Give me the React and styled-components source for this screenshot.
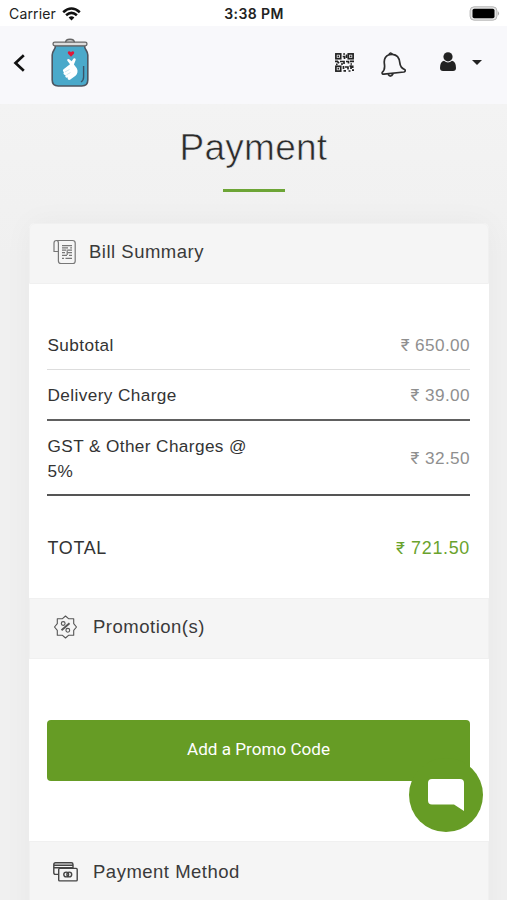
import styled, { createGlobalStyle } from 'styled-components';

const GlobalStyle = createGlobalStyle`
  * {
    box-sizing: border-box;
  }

  body {
    margin: 0;
    background: #f2f2f2;
    font-family: 'Liberation Sans', Arial, sans-serif;
    color: #3a3a3a;
  }
`;

const Screen = styled.div`
  position: relative;
  width: 507px;
  height: 900px;
  overflow: hidden;
  background: linear-gradient(#f3f3f3 104px, #f0f0f0 260px);
`;

const StatusBar = styled.div`
  display: grid;
  grid-template-columns: 1fr auto 1fr;
  align-items: center;
  height: 26px;
  padding: 1px 7px 0 9px;
  background: #fff;
  font-family: Inter, sans-serif;
  font-size: 14px;
  color: #222;
`;

const Carrier = styled.div`
  display: flex;
  align-items: center;
  gap: 6px;
  letter-spacing: 0.15px;
`;

const Clock = styled.div`
  padding-right: 1px;
  font-weight: 600;
  font-size: 14px;
  letter-spacing: 0.4px;
`;

const Battery = styled.svg`
  justify-self: end;
`;

const Header = styled.header`
  display: flex;
  align-items: center;
  height: 78px;
  padding: 0 25px 0 13px;
  background: #f8f8fb;
`;

const BackIcon = styled.svg`
  margin-bottom: 4px;
`;

const Logo = styled.svg`
  margin: 0 auto 4px 24px;
`;

const HeaderActions = styled.div`
  display: flex;
  align-items: center;
  margin-bottom: 5px;
`;

const Bell = styled.svg`
  margin: 4px 34px 0 27px;
`;

const UserIcon = styled.svg`
  margin-bottom: 2px;
`;

const Caret = styled.span`
  margin-left: 16px;
  margin-bottom: 1px;
  border: 5px solid transparent;
  border-top-color: #222;
  border-bottom: 0;
`;

const Title = styled.h1`
  margin: 0;
  padding-top: 22px;
  font-size: 37px;
  line-height: 44px;
  font-weight: 400;
  letter-spacing: 0.25px;
  text-align: center;
  color: #2b2b2b;
  -webkit-text-stroke: 0.6px #f2f2f2;
`;

const TitleRule = styled.div`
  width: 62px;
  height: 3px;
  margin: 19px auto 31px;
  background: #6da536;
`;

const Card = styled.main`
  width: 460px;
  height: 760px;
  margin-left: 29px;
  border-radius: 6px;
  background: #fff;
  box-shadow: 0 0 30px rgba(0, 0, 0, 0.04);
`;

const SectionHead = styled.div`
  display: flex;
  align-items: center;
  gap: ${({ $gap }) => $gap || 15}px;
  height: 61px;
  padding: ${({ $top }) => $top || 0}px 0 4px 23px;
  border: 1px solid #f0f0f0;
  border-radius: ${({ $first }) => ($first ? '6px 6px 0 0' : '0')};
  background: #f5f5f5;
  font-size: 18.5px;
  letter-spacing: 0.5px;
`;

const Bill = styled.div`
  height: 314px;
  padding: 36px 19px 0 18px;
`;

const Row = styled.div`
  display: flex;
  align-items: center;
  justify-content: space-between;
  height: ${({ $height }) => $height}px;
  padding-top: 2px;
  border-bottom: ${({ $border }) => $border || 'none'};
  font-size: ${({ $total }) => ($total ? 17.9 : 17.2)}px;
  line-height: 25px;
  letter-spacing: ${({ $total }) => ($total ? 0.7 : 0.4)}px;
  color: #333;
`;

const Label = styled.span`
  width: 215px;
  padding-left: 0.5px;
`;

const Amount = styled.span`
  color: ${({ $total }) => ($total ? '#6aa32d' : '#8f8f8f')};
`;

const Rupee = styled.span`
  font-family: Roboto, sans-serif;
  font-size: 17px;
`;

const PromoArea = styled.div`
  height: 182px;
  padding: 61px 19px 0 18px;
`;

const PromoButton = styled.button`
  width: 100%;
  height: 61px;
  padding: 0 0 3px;
  border: 0;
  border-radius: 4px;
  background: #669c25;
  color: #fff;
  font-family: Roboto, sans-serif;
  font-size: 17.1px;
`;

const ChatButton = styled.button`
  position: absolute;
  left: 409px;
  top: 758px;
  width: 74px;
  height: 74px;
  padding: 0;
  border: 0;
  border-radius: 50%;
  background: #669c25;
`;

const charges = [
  { label: 'Subtotal', amount: '650.00', height: 50, border: '1px solid #ddd' },
  { label: 'Delivery Charge', amount: '39.00', height: 51, border: '2px solid #606060' },
  { label: 'GST & Other Charges @ 5%', amount: '32.50', height: 75, border: '2px solid #555' },
  { label: 'TOTAL', amount: '721.50', height: 102, total: true },
];

function WifiIcon() {
  return (
    <svg width="19" height="14" viewBox="0 0 19 14" fill="none" stroke="#111" strokeWidth="2.6">
      <path d="M1.2 5.2Q9.5 -2.2 17.8 5.2" />
      <path d="M4.1 8.3Q9.5 3.6 14.9 8.3" />
      <path d="M6.6 10.4Q9.5 8 12.4 10.4L9.5 13.5Z" fill="#111" stroke="none" />
    </svg>
  );
}

function JarLogo() {
  return (
    <Logo width="40" height="50" viewBox="0 0 40 50">
      <path d="M15.5 5C15.5 0 24.5 0 24.5 5" fill="#ccc" stroke="#666" strokeWidth="1.4" />
      <path
        d="M5.5 7.5H34.5C34.5 12 37.8 12.5 37.8 17V42Q37.8 48 31.8 48H8.2Q2.2 48 2.2 42V17C2.2 12.5 5.5 12 5.5 7.5Z"
        fill="#4aa9ca"
        stroke="#4c5661"
        strokeWidth="1.6"
      />
      <rect x="3" y="4.2" width="34" height="3.6" rx="1.8" fill="#ddd" stroke="#666" strokeWidth="1.3" />
      <path d="M33.6 28V39Q33.6 42.5 31 44" fill="none" stroke="#3a5469" strokeWidth="1.4" />
      <path
        d="M21 18.8L18.3 15.9C16.7 13.8 19.3 12 21 14.2C22.7 12 25.3 13.8 23.7 15.9Z"
        fill="#df1739"
      />
      <path
        d="M17.2 22.4C17.2 20.9 18.5 20.6 19.6 21.5L21.6 23.2L23.4 20.8C24.6 19.7 26.2 20.6 25.6 22.2L23.9 26.5L26.8 30.2C28.2 33 27.6 35.6 25.5 37.8L20 41.8C18.5 42.3 17.2 41.2 17.8 39.6C15.8 40.2 14.6 38.6 15.6 37.1C13.7 37.2 12.8 35.6 14 34.1C12.4 33.5 12.6 31.7 14.2 30.8L20 26.2Z"
        fill="#fff"
      />
      <path d="M15 34L19.5 31.5M16.5 36.8L20.5 34.5" fill="none" stroke="#a9d3e2" strokeWidth="0.6" />
    </Logo>
  );
}

function QrIcon() {
  return (
    <svg width="19" height="19" viewBox="0 0 19 19" fill="none" stroke="#222" strokeWidth="1.7">
      <rect x="0.9" y="0.9" width="4.8" height="4.8" />
      <rect x="13.3" y="0.9" width="4.8" height="4.8" />
      <rect x="0.9" y="13.3" width="4.8" height="4.8" />
      <path
        d="M2.5 3.3H4M14.9 3.3H16.5M2.5 15.7H4M8.2 1H10M7.7 3.5H9.5V6M11.6 1.5V5M0 8.4H2.4L4 10.3M5 8.5H9V11M11 8.5H13.5V10.5M15 8.4H19M1 11.3H2.6M6 11H8M15.5 11H17M8.5 13V16M10 14H13V16.5M14.5 13.2H16V16M17.7 12.5V15M8.5 17.8H11M13.5 18H15.5M17 17.2H19"
      />
    </svg>
  );
}

function BellIcon() {
  return (
    <Bell width="25" height="27" viewBox="0 0 25 27" fill="none" stroke="#2c2c2c" strokeWidth="1.7" strokeLinejoin="round">
      <path d="M7.9 3.7Q9.2 0.5 11.5 3.3C16.7 3.7 18.3 6.8 18.8 11.6C19.1 15.6 21 17.5 24 18.7Q24.7 20.4 23 21L3 23.2Q0.7 23.3 1.2 21.4C3.8 19.3 4 17 3.4 13C2.7 8.2 4 5.2 7.9 3.7Z" />
      <path d="M7 23.3Q9.5 27 12.1 22.8" />
      <path d="M8 3.6L11.4 3.3" />
    </Bell>
  );
}

function BillIcon() {
  return (
    <svg width="24" height="26" viewBox="0 0 24 26" fill="none" stroke="#777" strokeWidth="1.2">
      <path d="M5.4 12.5H1V4Q1 1.5 3.4 1.5H19.5Q22.2 1.5 22.2 4V22Q22.2 24.5 20 24.5H8Q5.4 24.5 5.4 22V4Q5.4 1.5 3.4 1.5" />
      <path d="M9 6.7H19M9 8.8H15M17.2 8.8H19M9 11.2H13M15 11.2H19M9 13.7H12M14.5 13.7H19M9 16.3H14M16 16.3H19M9 19.3H11M12.5 19.3H19" />
      <path d="M14.2 10.5V16" />
    </svg>
  );
}

function PromoIcon() {
  return (
    <svg width="25" height="24" viewBox="0 0 25 24" fill="none" stroke="#555" strokeWidth="1.1" strokeLinejoin="round">
      <path d="M12.5 1L15.8 3.8H20.7V8.7L23.5 12L20.7 15.3V20.2H15.8L12.5 23L9.2 20.2H4.3V15.3L1.5 12L4.3 8.7V3.8H9.2Z" />
      <circle cx="10.2" cy="8.5" r="1.9" />
      <circle cx="14.8" cy="15.3" r="1.9" />
      <path d="M16.5 8.2L8.5 15.2" strokeWidth="1.9" />
    </svg>
  );
}

function CardsIcon() {
  return (
    <svg width="25" height="20" viewBox="0 0 25 20" fill="none" stroke="#444" strokeWidth="1.4">
      <path d="M5.5 12.4H2.5Q0.8 12.4 0.8 10.8V2.5Q0.8 0.8 2.5 0.8H18.3Q20 0.8 20 2.5V6M0.8 3.3H20M0.8 5.7H20" />
      <rect x="5.7" y="6.4" width="18.5" height="12.5" rx="1" />
      <circle cx="13.2" cy="12.5" r="2.4" />
      <circle cx="16.3" cy="12.5" r="2.4" />
    </svg>
  );
}

function App() {
  return (
    <Screen>
      <GlobalStyle />
      <StatusBar>
        <Carrier>
          Carrier
          <WifiIcon />
        </Carrier>
        <Clock>3:38 PM</Clock>
        <Battery width="31" height="15" viewBox="0 0 31 15">
          <rect x="1.1" y="0.8" width="26.8" height="13.4" rx="4" fill="#e5e5e5" stroke="#b5b5b5" />
          <rect x="3.5" y="2.7" width="22" height="9.6" rx="1.8" fill="#000" />
          <path d="M28.8 5Q31.3 7.4 28.8 9.8Z" fill="#aaa" />
        </Battery>
      </StatusBar>
      <Header>
        <BackIcon width="13" height="18" viewBox="0 0 13 18" fill="none" stroke="#111" strokeWidth="2.7">
          <path d="M10.8 1.2L2.5 9L10.8 16.8" />
        </BackIcon>
        <JarLogo />
        <HeaderActions>
          <QrIcon />
          <BellIcon />
          <UserIcon width="16" height="19" viewBox="0 0 16 19" fill="#222">
            <circle cx="8" cy="4.8" r="4.6" />
            <path d="M4 8.7Q8 12.3 12 8.7Q16 9.5 16 16Q16 19 13 19H3Q0 19 0 16Q0 9.5 4 8.7Z" />
          </UserIcon>
          <Caret />
        </HeaderActions>
      </Header>
      <Title>Payment</Title>
      <TitleRule />
      <Card>
        <SectionHead $first $gap={12}>
          <BillIcon />
          Bill Summary
        </SectionHead>
        <Bill>
          {charges.map((charge) => (
            <Row key={charge.label} $height={charge.height} $border={charge.border} $total={charge.total}>
              <Label>{charge.label}</Label>
              <Amount $total={charge.total}>
                <Rupee>₹</Rupee> {charge.amount}
              </Amount>
            </Row>
          ))}
        </Bill>
        <SectionHead>
          <PromoIcon />
          Promotion(s)
        </SectionHead>
        <PromoArea>
          <PromoButton>Add a Promo Code</PromoButton>
        </PromoArea>
        <SectionHead $top={4}>
          <CardsIcon />
          Payment Method
        </SectionHead>
      </Card>
      <ChatButton aria-label="Chat">
        <svg width="74" height="74" viewBox="0 0 74 74">
          <path d="M23 21H51Q55 21 55 25V53L45 46.5H23Q19 46.5 19 42.5V25Q19 21 23 21Z" fill="#fff" />
        </svg>
      </ChatButton>
    </Screen>
  );
}

export default App;
